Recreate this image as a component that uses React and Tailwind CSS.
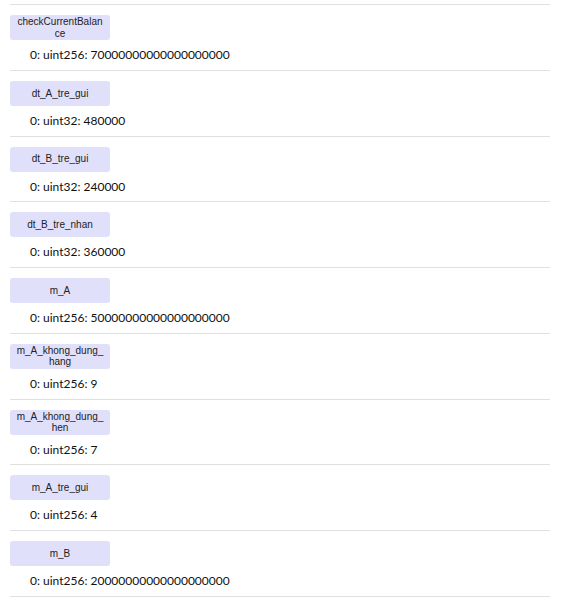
import React from "react";

const results = [
  { name: "checkCurrentBalance", value: "0: uint256: 70000000000000000000" },
  { name: "dt_A_tre_gui", value: "0: uint32: 480000" },
  { name: "dt_B_tre_gui", value: "0: uint32: 240000" },
  { name: "dt_B_tre_nhan", value: "0: uint32: 360000" },
  { name: "m_A", value: "0: uint256: 50000000000000000000" },
  { name: "m_A_khong_dung_hang", value: "0: uint256: 9" },
  { name: "m_A_khong_dung_hen", value: "0: uint256: 7" },
  { name: "m_A_tre_gui", value: "0: uint256: 4" },
  { name: "m_B", value: "0: uint256: 20000000000000000000" },
];

function CallRow({ name, value }) {
  return (
    <div className="border-t border-[#e0e0e0] pt-[10px] pb-[4.78px]">
      <button className="flex h-[25px] w-[100px] items-center justify-center rounded-[3px] bg-[#e1e0fa] px-[6px] text-center font-['Liberation_Sans',Arial,sans-serif] text-[10px] leading-[11.5px] text-[#222] break-all">
        {name}
      </button>
      <p className="pt-[5px] pl-[20px] font-['Lato',sans-serif] text-[12px] leading-[20px] text-[#111]">
        {value}
      </p>
    </div>
  );
}

export default function App() {
  return (
    <div className="min-h-screen bg-white pt-[4px] pl-[10px] pr-[15px]">
      {results.map((r) => (
        <CallRow key={r.name} name={r.name} value={r.value} />
      ))}
      <div className="border-t border-[#e0e0e0]" />
    </div>
  );
}
